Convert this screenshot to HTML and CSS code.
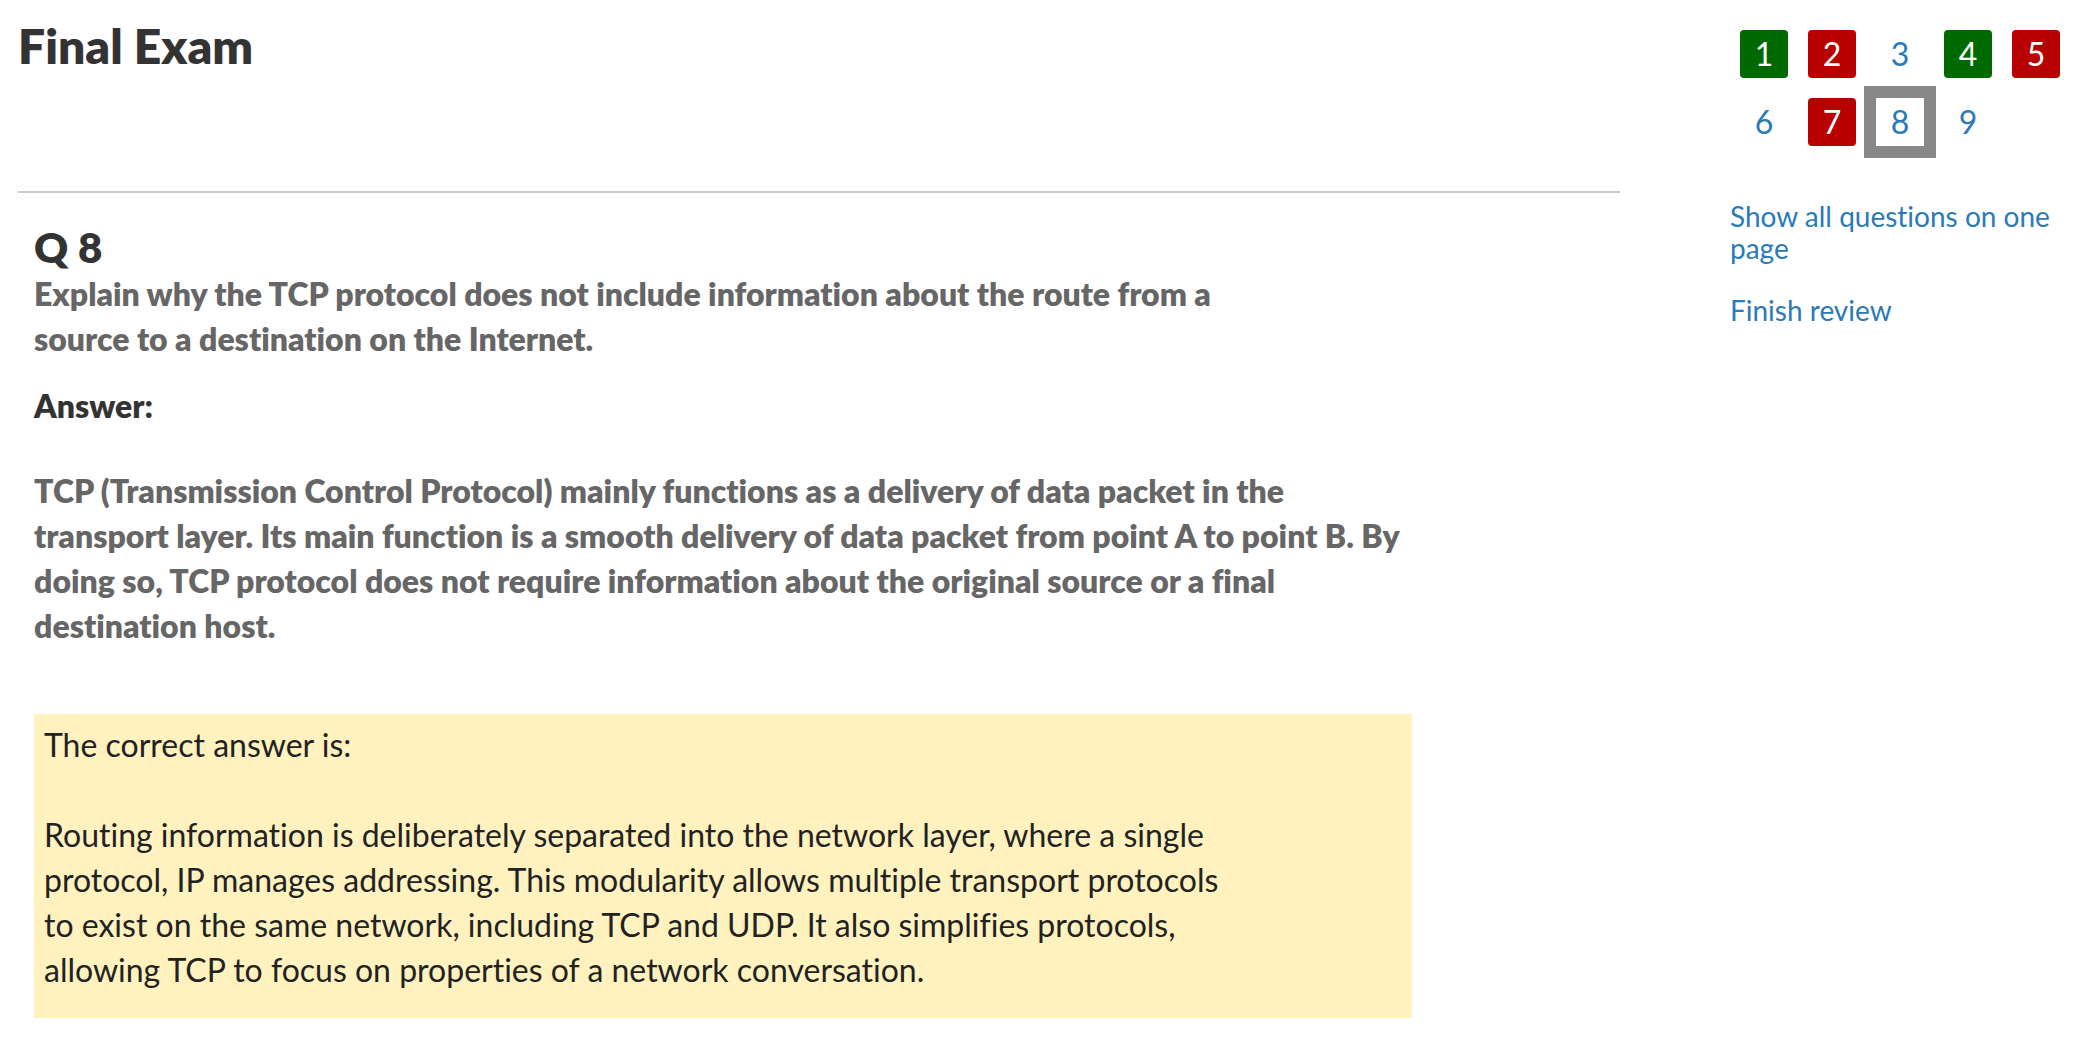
FILE: index.html
```html
<!DOCTYPE html>
<html lang="en">
<head>
<meta charset="utf-8">
<meta name="viewport" content="width=device-width, initial-scale=1">
<title>Final Exam</title>
<link rel="stylesheet" href="styles.css">
</head>
<body>
<div class="page">
  <main class="main">
    <header class="exam-header">
      <h1 class="exam-title">Final Exam</h1>
    </header>
    <article class="question">
      <h2 class="question-number">Q 8</h2>
      <p class="question-text">Explain why the TCP protocol does not include information about the route from a<br>source to a destination on the Internet.</p>
      <h3 class="answer-label">Answer:</h3>
      <p class="answer-text">TCP (Transmission Control Protocol) mainly functions as a delivery of data packet in the<br>transport layer. Its main function is a smooth delivery of data packet from point A to point B. By<br>doing so, TCP protocol does not require information about the original source or a final<br>destination host.</p>
      <section class="feedback">
        <p class="feedback-text">The correct answer is:</p>
        <p class="feedback-text">Routing information is deliberately separated into the network layer, where a single<br>protocol, IP manages addressing. This modularity allows multiple transport protocols<br>to exist on the same network, including TCP and UDP. It also simplifies protocols,<br>allowing TCP to focus on properties of a network conversation.</p>
      </section>
    </article>
  </main>
  <aside class="sidebar">
    <nav class="question-nav" aria-label="Questions">
      <a class="cell correct" href="#q1">1</a>
      <a class="cell incorrect" href="#q2">2</a>
      <a class="cell" href="#q3">3</a>
      <a class="cell correct" href="#q4">4</a>
      <a class="cell incorrect" href="#q5">5</a>
      <a class="cell" href="#q6">6</a>
      <a class="cell incorrect" href="#q7">7</a>
      <a class="cell current" href="#q8" aria-current="page">8</a>
      <a class="cell" href="#q9">9</a>
    </nav>
    <a class="side-link" href="#all">Show all questions on one page</a>
    <a class="side-link" href="#finish">Finish review</a>
  </aside>
</div>
</body>
</html>
```
FILE: styles.css
```css
* {
  box-sizing: border-box;
}

body {
  margin: 0;
  background: #fff;
  color: #333;
  font-family: Lato, "Open Sans", sans-serif;
  font-size: 32px;
  font-variant-ligatures: none;
  line-height: 45px;
}

h1, h2, h3, p {
  margin: 0;
}

h1, h2, h3 {
  font-weight: 800;
}

.page {
  display: flex;
  gap: 110px;
  padding: 0 18px;
}

.main {
  flex: 1;
  min-width: 0;
}

.exam-header {
  padding: 19px 0 118px;
  border-bottom: 2px solid #ccc;
}

.exam-title {
  font-size: 48px;
  line-height: 54px;
}

.question {
  max-width: 1394px;
  padding: 30px 0 24px 16px;
}

.question-number {
  font-size: 42px;
  line-height: 48px;
}

.question-text,
.answer-text {
  color: #666;
  font-weight: 800;
}

.answer-label {
  margin: 22px 0 40px;
  font-size: 32px;
}

.feedback {
  display: grid;
  gap: 45px;
  margin-top: 66px;
  padding: 8px 10px 26px;
  background: #fff2bf;
  color: #222;
}

.sidebar {
  flex: 0 0 338px;
  padding-top: 30px;
}

.question-nav {
  display: grid;
  grid-template-columns: repeat(5, 48px);
  gap: 20px;
  margin: 0 0 54px 10px;
}

.cell {
  border-radius: 4px;
  color: #2a7ab8;
  line-height: 48px;
  text-align: center;
  text-decoration: none;
}

.correct {
  background: #006a00;
  color: #fff;
}

.incorrect {
  background: #b80000;
  color: #fff;
}

.current {
  border-radius: 0;
  box-shadow: 0 0 0 12px #888;
}

.side-link {
  display: block;
  margin-bottom: 30px;
  color: #2a7ab8;
  font-size: 28px;
  line-height: 32px;
  text-decoration: none;
}
```
